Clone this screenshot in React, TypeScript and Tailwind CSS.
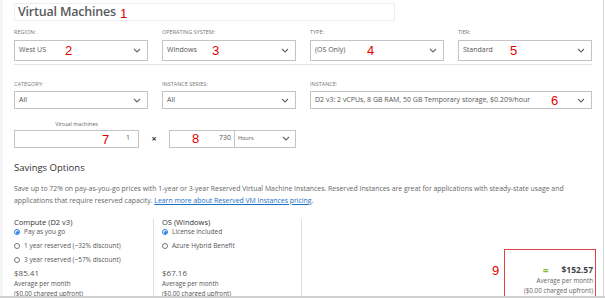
import React from "react";

const Chevron = () => (
  <svg width="8" height="5" viewBox="0 0 8 5" className="shrink-0">
    <path d="M1 1l3 3 3-3" fill="none" stroke="#666" strokeWidth="1.1" />
  </svg>
);

const Select = ({ value, h = "h-[21px]" }: { value: string; h?: string }) => (
  <div className={`relative flex items-center justify-between border border-[#c4c4c4] bg-white pl-[4px] pr-[6px] ${h}`}>
    <span className="text-[7px] text-[#555] whitespace-nowrap">{value}</span>
    <Chevron />
  </div>
);

const Label = ({ children }: { children: React.ReactNode }) => (
  <div className="text-[5.5px] uppercase text-[#777] leading-none mb-[4px]">{children}</div>
);

const Red = ({ children, className }: { children: React.ReactNode; className: string }) => (
  <span className={`absolute text-[13px] leading-none text-[#e00000] font-['Liberation_Sans',sans-serif] ${className}`}>{children}</span>
);

const Radio = ({ checked, label }: { checked?: boolean; label: string }) => (
  <div className="flex items-center gap-[4px] h-[14px]">
    <span className={`w-[6px] h-[6px] rounded-full border ${checked ? "border-[#2a7de1] bg-white flex items-center justify-center" : "border-[#777]"}`}>
      {checked && <span className="w-[3px] h-[3px] rounded-full bg-[#2a7de1]" />}
    </span>
    <span className="text-[6.5px] text-[#555]">{label}</span>
  </div>
);

export default function App() {
  return (
    <div className="relative w-[605px] h-[298px] overflow-hidden bg-white font-['Open_Sans',sans-serif] text-[#444]">
      <div className="absolute left-0 top-0 bottom-0 w-[3px] bg-[#f6f6f6]" />
      <div className="absolute right-[1px] top-0 bottom-0 w-[1px] bg-[#d8d8d8]" />
      <div className="pl-[14px] pr-[13px] pt-[3px]">
        {/* Title */}
        <div className="relative w-[381px] h-[18px] border border-[#eeeeee] flex items-center pl-[3px]">
          <span className="text-[12.5px] font-semibold text-[#5a5a5a] tracking-[-0.2px]">Virtual Machines</span>
          <Red className="left-[105px] top-[3px]">1</Red>
        </div>

        {/* Row 1 */}
        <div className="grid grid-cols-4 gap-x-[14px] mt-[9px] w-[578px]">
          <div>
            <Label>Region:</Label>
            <div className="relative">
              <Select value="West US" />
              <Red className="left-[51px] top-[4px]">2</Red>
            </div>
          </div>
          <div>
            <Label>Operating System:</Label>
            <div className="relative">
              <Select value="Windows" />
              <Red className="left-[50px] top-[4px]">3</Red>
            </div>
          </div>
          <div>
            <Label>Type:</Label>
            <div className="relative">
              <Select value="(OS Only)" />
              <Red className="left-[57px] top-[4px]">4</Red>
            </div>
          </div>
          <div>
            <Label>Tier:</Label>
            <div className="relative">
              <Select value="Standard" />
              <Red className="left-[52px] top-[4px]">5</Red>
            </div>
          </div>
        </div>

        <div className="h-px bg-[#e4e4e4] w-[578px] mt-[3px]" />

        {/* Row 2 */}
        <div className="grid grid-cols-4 gap-x-[14px] mt-[17px] w-[578px]">
          <div>
            <Label>Category:</Label>
            <Select value="All" h="h-[18px]" />
          </div>
          <div>
            <Label>Instance series:</Label>
            <Select value="All" h="h-[18px]" />
          </div>
          <div className="col-span-2">
            <Label>Instance:</Label>
            <div className="relative">
              <Select value="D2 v3: 2 vCPUs, 8 GB RAM, 50 GB Temporary storage, $0.209/hour" h="h-[18px]" />
              <Red className="left-[241px] top-[3px]">6</Red>
            </div>
          </div>
        </div>

        {/* Row 3 */}
        <div className="flex items-end mt-[13px]">
          <div className="w-[125px]">
            <div className="text-[5.5px] text-[#666] text-center leading-none mb-[2px]">Virtual machines</div>
            <div className="relative h-[18px] border border-[#c4c4c4] flex items-center justify-end pr-[8px]">
              <span className="text-[7px] text-[#555]">1</span>
              <Red className="left-[87px] top-[2px]">7</Red>
            </div>
          </div>
          <div className="w-[30px] h-[18px] flex items-center justify-center text-[9px] font-bold text-[#333]">×</div>
          <div className="flex w-[127px] h-[18px] border border-[#c4c4c4]">
            <div className="relative w-[64px] flex items-center justify-end pr-[3px]">
              <span className="text-[7px] text-[#555]">730</span>
              <Red className="left-[22px] top-[1px]">8</Red>
            </div>
            <div className="flex-1 border-l border-[#c4c4c4] flex items-center justify-between pl-[3px] pr-[5px]">
              <span className="text-[5.5px] text-[#555]">Hours</span>
              <Chevron />
            </div>
          </div>
        </div>

        {/* Savings */}
        <div className="mt-[15px] text-[9.5px] font-medium text-[#333] leading-none">Savings Options</div>
        <p className="mt-[11px] text-[6.9px] leading-[12px] text-[#666] w-[580px]">
          Save up to 72% on pay-as-you-go prices with 1-year or 3-year Reserved Virtual Machine Instances. Reserved Instances are great for applications with steady-state usage and applications that require reserved capacity.{" "}
          <span className="text-[#1a6fc2] underline">Learn more about Reserved VM Instances pricing</span>.
        </p>

        <div className="flex mt-[12px] h-[90px]">
          <div className="w-[140px] border-r border-[#e0e0e0]">
            <div className="text-[7.5px] text-[#333] leading-none h-[6px]">Compute (D2 v3)</div>
            <Radio checked label="Pay as you go" />
            <Radio label="1 year reserved (~32% discount)" />
            <Radio label="3 year reserved (~57% discount)" />
            <div className="text-[8px] text-[#555] leading-[12px]">$85.41</div>
            <div className="text-[6.3px] text-[#555] leading-[10px]">Average per month</div>
            <div className="text-[6.3px] text-[#555] leading-[10px]">($0.00 charged upfront)</div>
          </div>
          <div className="w-[148px] border-r border-[#e0e0e0] pl-[8px]">
            <div className="text-[7.5px] text-[#333] leading-none h-[6px]">OS (Windows)</div>
            <Radio checked label="License included" />
            <Radio label="Azure Hybrid Benefit" />
            <div className="h-[14px]" />
            <div className="text-[8px] text-[#555] leading-[12px]">$67.16</div>
            <div className="text-[6.3px] text-[#555] leading-[10px]">Average per month</div>
            <div className="text-[6.3px] text-[#555] leading-[10px]">($0.00 charged upfront)</div>
          </div>
          <div className="flex-1 relative">
            <div className="absolute left-[202px] top-[30px] w-[92px] h-[60px] border-[1.5px] border-[#e04444] flex flex-col items-end pr-[2px] pt-[15px]">
              <div className="flex items-center leading-none">
                <span className="text-[10px] font-bold text-[#7cba2a] mr-[13px]">=</span>
                <span className="text-[8.5px] font-bold text-[#444]">$152.57</span>
              </div>
              <div className="text-[6.3px] text-[#666] leading-[10px] mt-[1px]">Average per month</div>
              <div className="text-[6.3px] text-[#666] leading-[10px]">($0.00 charged upfront)</div>
            </div>
            <Red className="left-[190px] top-[45px]">9</Red>
          </div>
        </div>
      </div>
      <div className="absolute left-0 right-0 bottom-0 h-[2px] bg-[#cfcfcf]" />
    </div>
  );
}
